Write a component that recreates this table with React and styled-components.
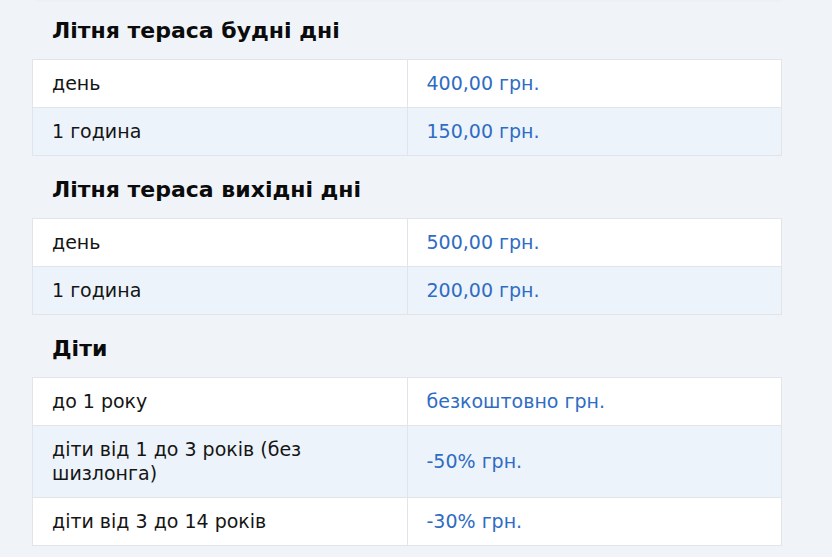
import React from "react"
import styled, { createGlobalStyle } from "styled-components"

const GlobalStyle = createGlobalStyle`
  html, body {
    margin: 0;
    padding: 0;
    background: #ffffff;
  }
  body {
    font-family: "DejaVu Sans", "Noto Sans", sans-serif;
    color: #111111;
  }
`

const sections = [
  {
    title: "Літня тераса будні дні",
    rows: [
      ["день", "400,00 грн."],
      ["1 година", "150,00 грн."],
    ],
  },
  {
    title: "Літня тераса вихідні дні",
    rows: [
      ["день", "500,00 грн."],
      ["1 година", "200,00 грн."],
    ],
  },
  {
    title: "Діти",
    rows: [
      ["до 1 року", "безкоштовно грн."],
      ["діти від 1 до 3 років (без шизлонга)", "-50% грн."],
      ["діти від 3 до 14 років", "-30% грн."],
    ],
  },
]

const App = () => {
  return (
    <Page>
      <GlobalStyle />
      <Content>
        <TopCard />
        {sections.map((s) => (
          <Section key={s.title}>
            <Title>{s.title}</Title>
            <Table>
              <tbody>
                {s.rows.map(([label, price], i) => (
                  <Row key={label} $striped={i % 2 === 1}>
                    <Label>{label}</Label>
                    <Price>{price}</Price>
                  </Row>
                ))}
              </tbody>
            </Table>
          </Section>
        ))}
      </Content>
    </Page>
  )
}

const Page = styled.div`
  width: 832px;
  height: 557px;
  overflow: hidden;
  background: #f0f4f9;
`

const Content = styled.div`
  width: 750px;
  margin-left: 32px;
`

const TopCard = styled.div`
  height: 3px;
  margin: -6px 0 0 4px;
  background: #f0f4f9;
  box-shadow: 0 2px 4px rgba(40, 60, 90, 0.08);
`

const Section = styled.section`
  padding-top: 19px;

  & + & {
    padding-top: 19px;
  }
`

const Title = styled.h3`
  margin: 0 0 13px 20px;
  font-size: 22px;
  line-height: 30px;
  font-weight: 700;
  color: #0b0b0b;
`

const Table = styled.table`
  width: 100%;
  border-collapse: collapse;
  table-layout: fixed;
  background: #ffffff;
`

const Row = styled.tr`
  background: ${(p) => (p.$striped ? "#edf3fb" : "#ffffff")};
`

const Cell = styled.td`
  width: 50%;
  border: 1px solid #e1e5ea;
  padding: 11px 40px 12px 19px;
  font-size: 19px;
  line-height: 24px;
  vertical-align: middle;
`

const Label = styled(Cell)`
  color: #151515;
`

const Price = styled(Cell)`
  color: #2f6cc3;
`

export default App
